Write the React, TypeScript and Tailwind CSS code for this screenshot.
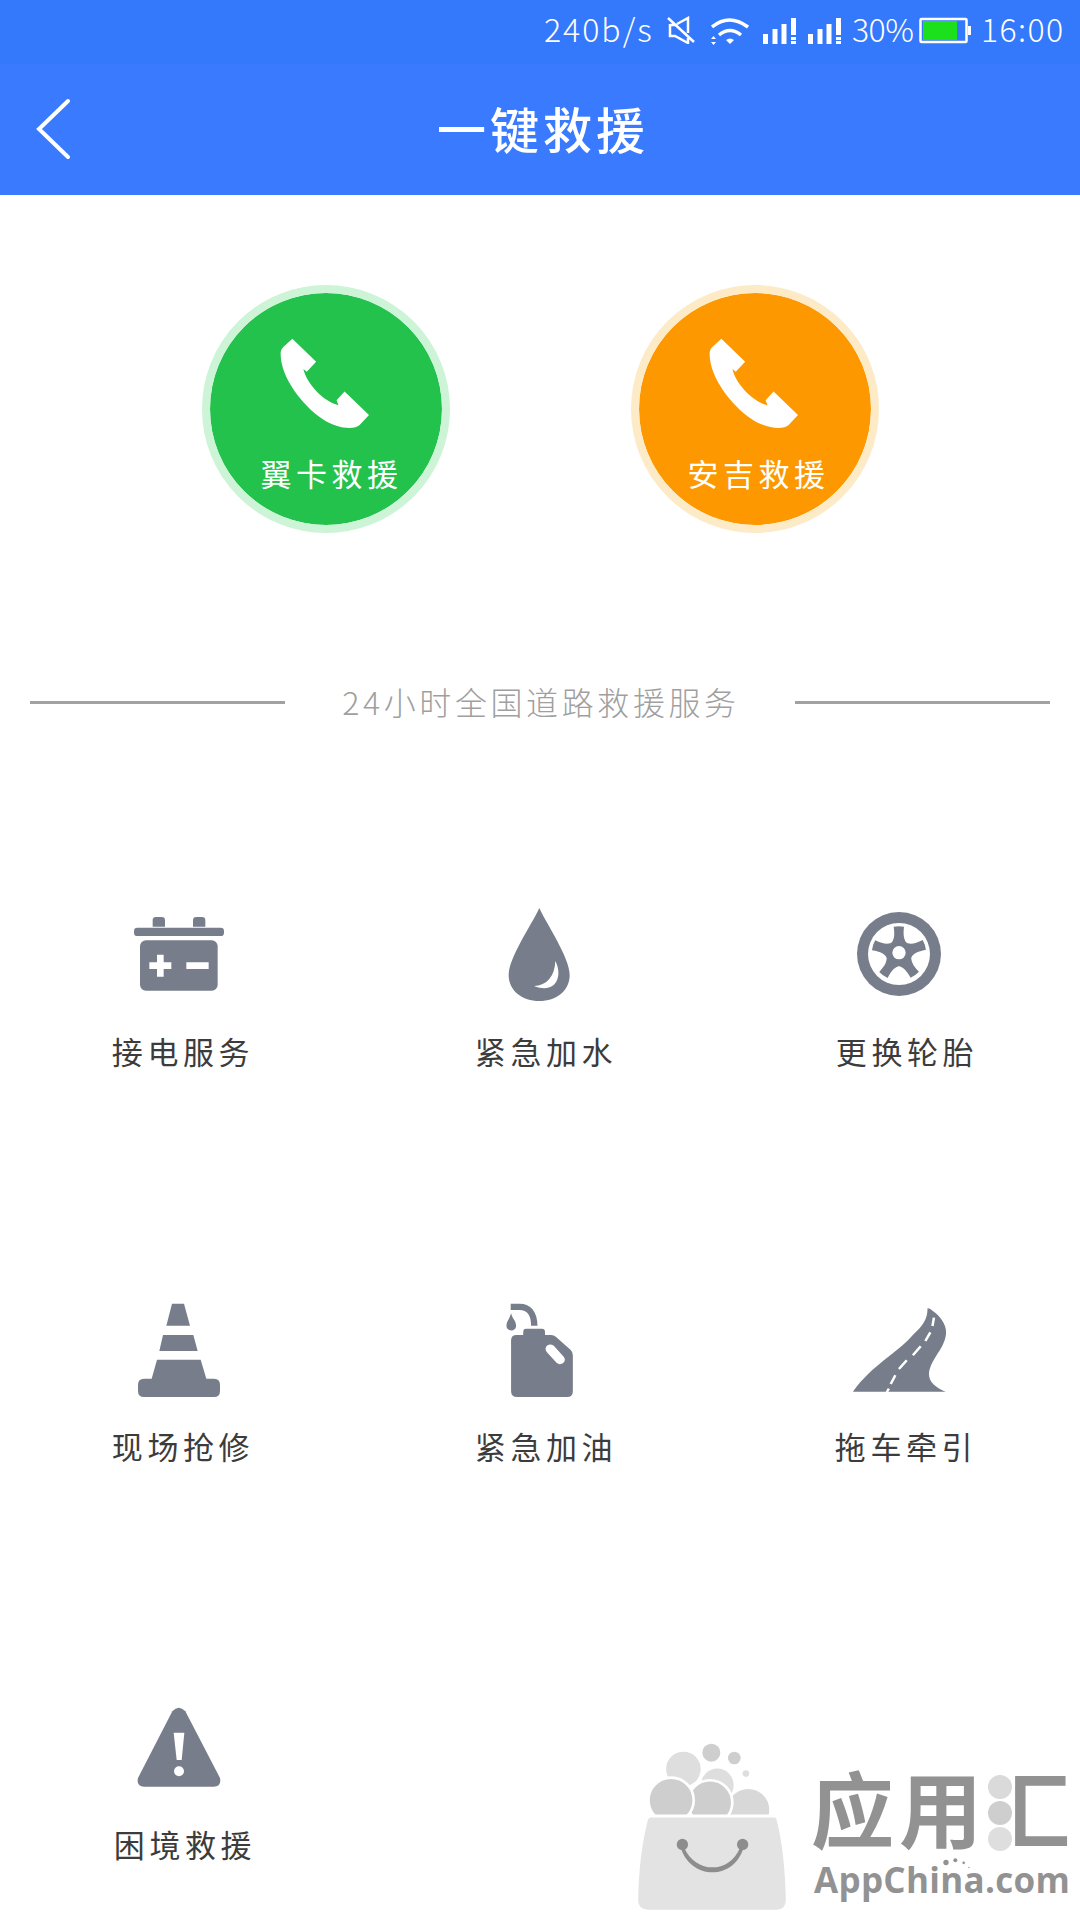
import type { ReactNode } from "react";

const services: { title: string; icon: ReactNode; labelClass: string }[] = [
    { title: "接电服务", icon: <BatteryIcon />, labelClass: "pl-[6px]" },
    { title: "紧急加水", icon: <DropIcon />, labelClass: "pl-[12px]" },
    { title: "更换轮胎", icon: <WheelIcon />, labelClass: "pl-[14px]" },
    { title: "现场抢修", icon: <ConeIcon />, labelClass: "pl-[6px]" },
    { title: "紧急加油", icon: <FuelIcon />, labelClass: "pl-[12px]" },
    { title: "拖车牵引", icon: <RoadIcon />, labelClass: "pl-[12px]" },
    { title: "困境救援", icon: <WarningIcon />, labelClass: "pl-[10px]" },
];

function BatteryIcon() {
    return (
        <svg viewBox="120 45 300 300" className="size-[100px] fill-[#777d8a]">
            <path d="M188 110V91q0-10 10-10h17q10 0 10 10v19zM309 110V91q0-10 10-10h17q10 0 10 10v19z" />
            <rect x="132" y="113" width="270" height="25" rx="10" />
            <rect x="150" y="151" width="233" height="151" rx="18" />
            <path fill="#fff" d="M201 194h20v23h23v20h-23v23h-20v-23h-23v-20h23zM289 217h67v20h-67z" />
        </svg>
    );
}

function DropIcon() {
    return (
        <svg viewBox="120 45 300 300" className="size-[100px] fill-[#777d8a]">
            <path d="M268 54C244 106 176 203 176 255c0 48 41 78 92 78s91-30 91-78c0-52-67-149-91-201z" />
            <path fill="#fff" d="M316 213c24 46 1 101-64 75 39-2 62-28 64-75z" />
        </svg>
    );
}

function WheelIcon() {
    const spokes = [0, 72, 144, 216, 288];
    return (
        <svg viewBox="90 45 300 300" className="size-[100px] fill-[#777d8a]">
            <circle cx="237" cy="192" r="126" />
            <circle cx="237" cy="192" r="93" fill="#fff" />
            <circle cx="237" cy="190" r="38" />
            {spokes.map((angle) => (
                <path
                    key={angle}
                    transform={`rotate(${angle} 237 190)`}
                    d="M221 110q16-3 31 0c-3 26-1 42 13 54l-56 0c14-12 16-28 12-54z"
                />
            ))}
            <circle cx="237" cy="188" r="20" fill="#fff" />
        </svg>
    );
}

function ConeIcon() {
    return (
        <svg viewBox="120 60 300 300" className="size-[100px] fill-[#777d8a]">
            <path d="M246 71h36l18 66h-71zM219 165h91l13 48H208zM201 239h131l17 57h23q18 0 18 18v19q0 18-18 18H162q-18 0-18-18v-19q0-18 18-18h23z" />
        </svg>
    );
}

function FuelIcon() {
    return (
        <svg viewBox="112 60 280 300" preserveAspectRatio="none" className="size-[100px] fill-[#777d8a]">
            <path d="M170 71h25c31 0 50 24 50 66h-18c0-31-10-47-33-47h-24zM171 100c4 17 14 23 14 37 0 19-27 19-27 0 0-14 9-20 13-37z" />
            <path d="M205 165v-9q0-10 8-10h45q8 0 8 10v9h17q8 0 14 6l41 39q6 6 6 16v107q0 18-16 18H188q-17 0-17-18V181q0-16 16-16z" />
            <path d="M281 207L308 239" stroke="#fff" strokeWidth="27" strokeLinecap="round" />
        </svg>
    );
}

function RoadIcon() {
    return (
        <svg viewBox="1120 60 280 300" preserveAspectRatio="none" className="size-[100px] fill-[#777d8a]">
            <path d="M1128 335C1185 252 1245 226 1296 165 1322 140 1338 117 1337 85q7 0 14 7c24 18 38 42 38 64 0 48-44 79-48 125 0 26 20 42 47 54z" />
            <path
                d="M1355 113L1351 138M1345 157L1331 183M1318 199L1296 226M1279 241L1257 267M1247 286L1234 312M1229 326L1223 336"
                fill="none"
                stroke="#fff"
                strokeWidth="7"
            />
        </svg>
    );
}

function WarningIcon() {
    return (
        <svg viewBox="120 24 300 300" className="size-[100px] fill-[#777d8a]">
            <path d="M247 64q19-22 39 0L390 264q5 26-19 26H162q-24-2-18-26z" />
            <path fill="#fff" d="M251 128h32l-8 82h-15z" />
            <circle cx="267" cy="244" r="15" fill="#fff" />
        </svg>
    );
}

function SignalIcon() {
    return (
        <svg viewBox="0 0 34 28" className="h-7 w-[34px] fill-white">
            <path d="M0 17h5v10H0zM9.500 12h5v15h-5zM18.500 7h5v20h-5zM28 1h5v17h-5zM28 20h5v3h-5zM28 24h5v3h-5z" />
        </svg>
    );
}

function StatusBar() {
    return (
        <div className="flex h-16 items-start bg-[#3478fb] pl-[544px] pt-[7px] text-[32px] font-light leading-[42px] text-white">
            <span className="w-[123px] tracking-[2px]">240b/s</span>
            <svg viewBox="0 0 28 28" className="mt-[9px] h-7 w-7 fill-none stroke-white" strokeWidth="2.5">
                <path d="M1 2L27 26M10 8L21 2V17M3 8V20H8L21 27V22M3 9L10 9" />
            </svg>
            <svg viewBox="0 0 38 28" className="ml-4 mt-[10px] h-7 w-[38px] fill-none stroke-white" strokeWidth="3.500">
                <path d="M1 10Q18 -4 37 10M8 18Q19 9 30 18" />
                <path d="M15 23q4-3 8 0l-4 4z" fill="#fff" stroke="none" />
                <path d="M0 22l2.500-3 2.500 3zM0 25l2.500 3 2.500-3z" fill="#fff" stroke="none" />
            </svg>
            <div className="ml-[14px] mt-[10px] flex gap-[11px]">
                <SignalIcon />
                <SignalIcon />
            </div>
            <span className="ml-[10px] w-[67px] tracking-[-0.5px]">30%</span>
            <svg viewBox="0 0 53 28" className="mt-[10px] h-7 w-[53px]">
                <rect x="1.500" y="2" width="46" height="23" rx="1" fill="none" stroke="#fff" strokeWidth="2.500" />
                <path d="M49 9h3v9h-3z" fill="#fff" />
                <path d="M4 4h34v19H4z" fill="#1be01b" />
            </svg>
            <span className="ml-[9px] tracking-[1.4px]">16:00</span>
        </div>
    );
}

function CallButton({ title, circleClass, textClass }: { title: string; circleClass: string; textClass: string }) {
    return (
        <button className={`flex size-[248px] flex-col items-center rounded-full border-8 pt-[45px] ${circleClass}`}>
            <svg viewBox="268 205 272 272" className="mr-[3px] size-[91px] fill-white">
                <path d="M308 207L379 276 351 306 341 298C350 341 401 396 446 406L440 391 464 365 537 435 509 465C493 480 442 477 398 447 337 407 274 322 273 256 273 239 277 235 285 228z" />
            </svg>
            <span className={`mt-6 text-[31px] leading-10 tracking-[4.5px] text-white ${textClass}`}>{title}</span>
        </button>
    );
}

function Watermark() {
    return (
        <div className="absolute left-[633px] top-[1740px] flex text-[#929292]">
            <svg viewBox="39 60 480 520" className="h-[173px] w-[160px]">
                <g fill="#dedede">
                    <circle cx="190" cy="147" r="52" />
                    <circle cx="292" cy="195" r="49" />
                </g>
                <g fill="#cecece">
                    <circle cx="274" cy="98" r="27" />
                    <circle cx="343" cy="114" r="19" />
                    <circle cx="378" cy="161" r="10" fill="#dedede" />
                </g>
                <g stroke="#fff" strokeWidth="8">
                    <circle cx="385" cy="270" r="67" fill="#d8d8d8" />
                    <circle cx="270" cy="248" r="67" fill="#cecece" />
                    <circle cx="153" cy="241" r="68" fill="#cecece" />
                </g>
                <path d="M39 284H519V410H39z" fill="#fff" />
                <path d="M92 293H463q6 0 8 10c16 65 25 142 27 237q0 30-28 30H84q-30 0-30-28c2-98 12-175 29-241q2-8 9-8z" fill="#e3e3e3" />
                <path d="M192 382C224 459 326 467 361 382L372 380C344 485 209 482 181 380z" fill="#8d8d8d" />
                <circle cx="187" cy="374" r="17" fill="#8d8d8d" />
                <circle cx="368" cy="374" r="17" fill="#8d8d8d" />
            </svg>
            <div className="relative ml-[18px] w-[264px] pt-6">
                <div className="whitespace-nowrap text-[83px] font-bold leading-[84px] tracking-[5px]">应用汇</div>
                {/* the water radical is drawn as three bubbles */}
                <div className="absolute left-[173px] top-[28px] flex h-[88px] w-[31px] flex-col items-center gap-[2px] bg-white pt-[7px]">
                    <span className="size-6 rounded-full bg-[#dadada]" />
                    <span className="size-6 rounded-full bg-[#cecece]" />
                    <span className="size-6 rounded-full bg-[#dedede]" />
                </div>
                <div className="mt-2 pl-[3px] font-['Open_Sans',sans-serif] text-[35px] font-bold leading-[48px] tracking-[0.3px]">AppChina.com</div>
                <svg viewBox="940 410 120 50" className="absolute left-[122px] top-[116px] h-[17px] w-10 fill-[#929292]">
                    <circle cx="979" cy="429" r="8" />
                    <circle cx="1007" cy="422" r="6" />
                    <circle cx="1032" cy="430" r="4" />
                    <circle cx="1048" cy="444" r="2" />
                </svg>
            </div>
        </div>
    );
}

export default function App() {
    return (
        <div className="relative h-[1920px] w-[1080px] overflow-hidden bg-white font-['Noto_Sans_CJK_SC',sans-serif]">
            <StatusBar />
            <header className="flex h-[131px] items-center bg-[#3a7aff] pb-[2px] pl-9 text-white">
                <svg viewBox="0 0 36 64" className="h-16 w-9 fill-none stroke-white" strokeWidth="4" strokeLinecap="round">
                    <path d="M32 4L3 32L32 60" />
                </svg>
                <h1 className="-mt-[3px] ml-[365px] text-[49px] font-medium leading-none tracking-[4px]">一键救援</h1>
            </header>

            <section className="flex gap-[181px] pl-[202px] pt-[90px]">
                <CallButton title="翼卡救援" circleClass="border-[#cdf4d6] bg-[#23c24c] bg-clip-padding" textClass="pl-[11px]" />
                <CallButton title="安吉救援" circleClass="border-[#fdebc8] bg-[#fe9800] bg-clip-padding" textClass="pl-[7px]" />
            </section>

            <div className="mt-[149px] flex h-10 items-center px-[30px] text-[#9f9f9f]">
                <span className="h-[3px] w-[255px] bg-[#a2a2a2]" />
                <span className="-mt-[3px] flex-1 pl-[2px] text-center text-[32px] font-light leading-10 tracking-[3.6px]">
                    24小时全国道路救援服务
                </span>
                <span className="h-[3px] w-[255px] bg-[#a2a2a2]" />
            </div>

            <section className="mt-[183px] grid grid-cols-3 grid-rows-[395px_398px_168px]">
                {services.map((item) => (
                    <div key={item.title} className="flex flex-col items-center">
                        {item.icon}
                        <span className={`mt-[26px] text-[31px] leading-10 tracking-[4.6px] text-[#3c3c3c] ${item.labelClass}`}>
                            {item.title}
                        </span>
                    </div>
                ))}
            </section>

            <Watermark />
        </div>
    );
}
